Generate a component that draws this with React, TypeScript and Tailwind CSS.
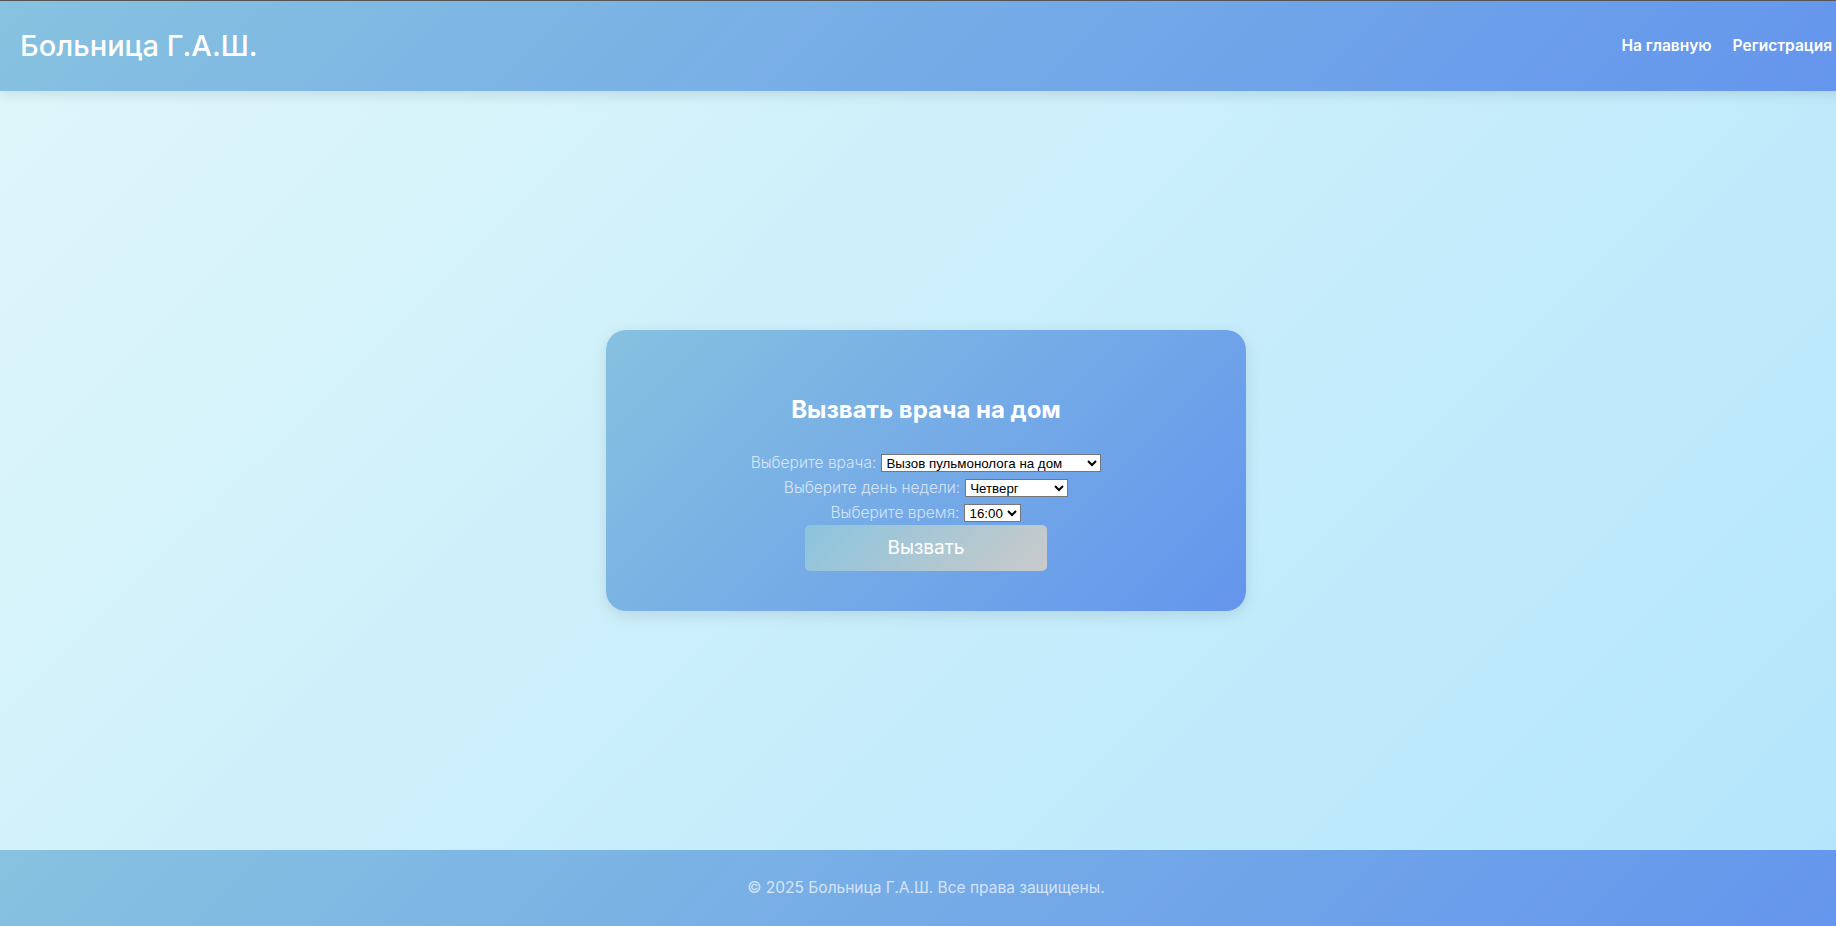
export default function App() {
  return (
    <div className="w-full min-h-screen overflow-hidden bg-[linear-gradient(135deg,#e0f7fa,#b3e5fc)] font-['Inter','Noto_Sans',sans-serif]">
      <div className="w-[1852px] min-h-screen flex flex-col">
        <header className="h-[91px] border-t border-[#555] px-5 flex items-center justify-between bg-[linear-gradient(135deg,#87c2e0,#6495ed)] shadow-[0_4px_12px_rgba(0,0,0,0.1)] relative z-10">
          <div className="text-[29px] font-medium text-white">Больница Г.А.Ш.</div>
          <nav className="flex gap-[21px] text-[15.5px] font-semibold text-white">
            <a href="#">На главную</a>
            <a href="#">Регистрация</a>
          </nav>
        </header>

        <main className="flex-1 flex items-center justify-center">
          <div className="w-[640px] px-10 pt-16 pb-10 rounded-[20px] flex flex-col items-center bg-[linear-gradient(135deg,#86c1e0,#6495ed)] shadow-[0_4px_15px_rgba(0,0,0,0.1)]">
            <h2 className="text-[24px] leading-8 font-bold text-white">Вызвать врача на дом</h2>
            <form className="mt-6 flex flex-col items-center">
              <div className="h-[25px] flex items-center gap-[5px]">
                <label className="text-[15.5px] font-light text-white/70">Выберите врача:</label>
                <select className="w-[220px] h-[18px] bg-white text-black border border-[#767676] font-['Liberation_Sans',sans-serif] text-[13.33px]" defaultValue="pulm">
                  <option value="pulm">Вызов пульмонолога на дом</option>
                </select>
              </div>
              <div className="h-[25px] flex items-center gap-[5px]">
                <label className="text-[15.5px] font-light text-white/70">Выберите день недели:</label>
                <select className="w-[103px] h-[18px] bg-white text-black border border-[#767676] font-['Liberation_Sans',sans-serif] text-[13.33px]" defaultValue="thu">
                  <option value="thu">Четверг</option>
                </select>
              </div>
              <div className="h-[25px] flex items-center gap-[5px]">
                <label className="text-[15.5px] font-light text-white/70">Выберите время:</label>
                <select className="w-[57px] h-[18px] bg-white text-black border border-[#767676] font-['Liberation_Sans',sans-serif] text-[13.33px]" defaultValue="16">
                  <option value="16">16:00</option>
                </select>
              </div>
              <button type="button" className="w-[242px] h-[46px] rounded-[5px] text-[19px] text-white bg-[linear-gradient(135deg,#8bc4de,#cacaca)]">
                Вызвать
              </button>
            </form>
          </div>
        </main>

        <footer className="h-[76px] flex items-center justify-center bg-[linear-gradient(135deg,#87c2e0,#6495ed)]">
          <p className="text-[15.5px] text-white/70">© 2025 Больница Г.А.Ш. Все права защищены.</p>
        </footer>
      </div>
    </div>
  );
}
